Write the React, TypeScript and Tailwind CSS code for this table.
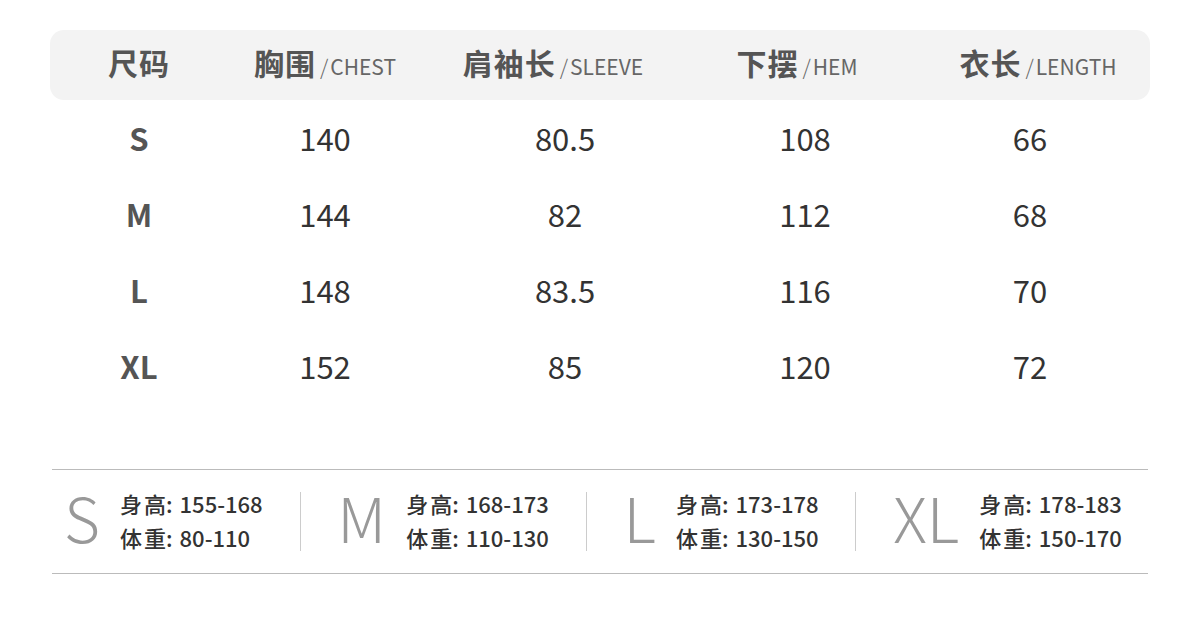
import React from "react";

// column widths chosen so the value centres land where the reference has them
const cols = [
  { w: "w-[178px]", head: "", zh: "尺码", en: "" },
  { w: "w-[194px]", head: "", zh: "胸围", en: "CHEST" },
  { w: "w-[286px]", head: "pr-[24px]", zh: "肩袖长", en: "SLEEVE" },
  { w: "w-[194px]", head: "pr-[16px]", zh: "下摆", en: "HEM" },
  { w: "w-[248px]", head: "pl-[24px]", zh: "衣长", en: "LENGTH" },
];

const rows = [
  ["S", "140", "80.5", "108", "66"],
  ["M", "144", "82", "112", "68"],
  ["L", "148", "83.5", "116", "70"],
  ["XL", "152", "85", "120", "72"],
];

const refs = [
  { size: "S", height: "155-168", weight: "80-110" },
  { size: "M", height: "168-173", weight: "110-130" },
  { size: "L", height: "173-178", weight: "130-150" },
  { size: "XL", height: "178-183", weight: "150-170" },
];

const font = { fontFamily: '"Noto Sans CJK SC", "Noto Sans", sans-serif' };

function Line({ a, b, value }: { a: string; b: string; value: string }) {
  return (
    <div className="flex">
      <span className="mr-[2px]">{a}</span>
      <span>{b}</span>
      <span>:</span>
      <span className="ml-[7px]">{value}</span>
    </div>
  );
}

export default function App() {
  return (
    <div className="h-[638px] w-[1200px] bg-white pt-[30px]" style={font}>
      <div className="mx-[50px]">
        {/* header */}
        <div className="flex h-[70px] items-center rounded-[14px] bg-[#f3f3f3] pb-[5px]">
          {cols.map((c, i) => (
            <div key={i} className={`${c.w} ${c.head} flex items-baseline justify-center`}>
              <span className="text-[30px] font-bold tracking-[1px] text-[#555]">{c.zh}</span>
              {c.en && (
                <span className="ml-[4px] text-[21px] font-normal text-[#666]">
                  <span className="mr-[2px] font-light">/</span>
                  {c.en}
                </span>
              )}
            </div>
          ))}
        </div>

        {/* rows */}
        <div>
          {rows.map((r) => (
            <div key={r[0]} className="flex h-[76px] items-center">
              {r.map((v, i) => (
                <div
                  key={i}
                  className={`${cols[i].w} ${i === 4 ? "pl-[8px]" : ""} text-center ${
                    i === 0 ? "text-[31px] font-bold text-[#555]" : "text-[31px] font-normal text-[#333]"
                  }`}
                >
                  {v}
                </div>
              ))}
            </div>
          ))}
        </div>

        {/* reference */}
        <div className="mx-[2px] mt-[65px] flex h-[105px] items-center justify-between border-y border-[#bbb] pl-[12px] pr-[26px]">
          {refs.map((g, i) => (
            <React.Fragment key={g.size}>
              {i > 0 && <div className="h-[59px] w-px bg-[#ccc]" />}
              <div className="flex items-center">
                <span className="mr-[20px] -mt-[12px] text-[62px] leading-none font-light text-[#999]">{g.size}</span>
                <div className="-mt-[4px] text-[22px] leading-[34px] font-medium text-[#333]">
                  <Line a="身" b="高" value={g.height} />
                  <Line a="体" b="重" value={g.weight} />
                </div>
              </div>
            </React.Fragment>
          ))}
        </div>
      </div>
    </div>
  );
}
